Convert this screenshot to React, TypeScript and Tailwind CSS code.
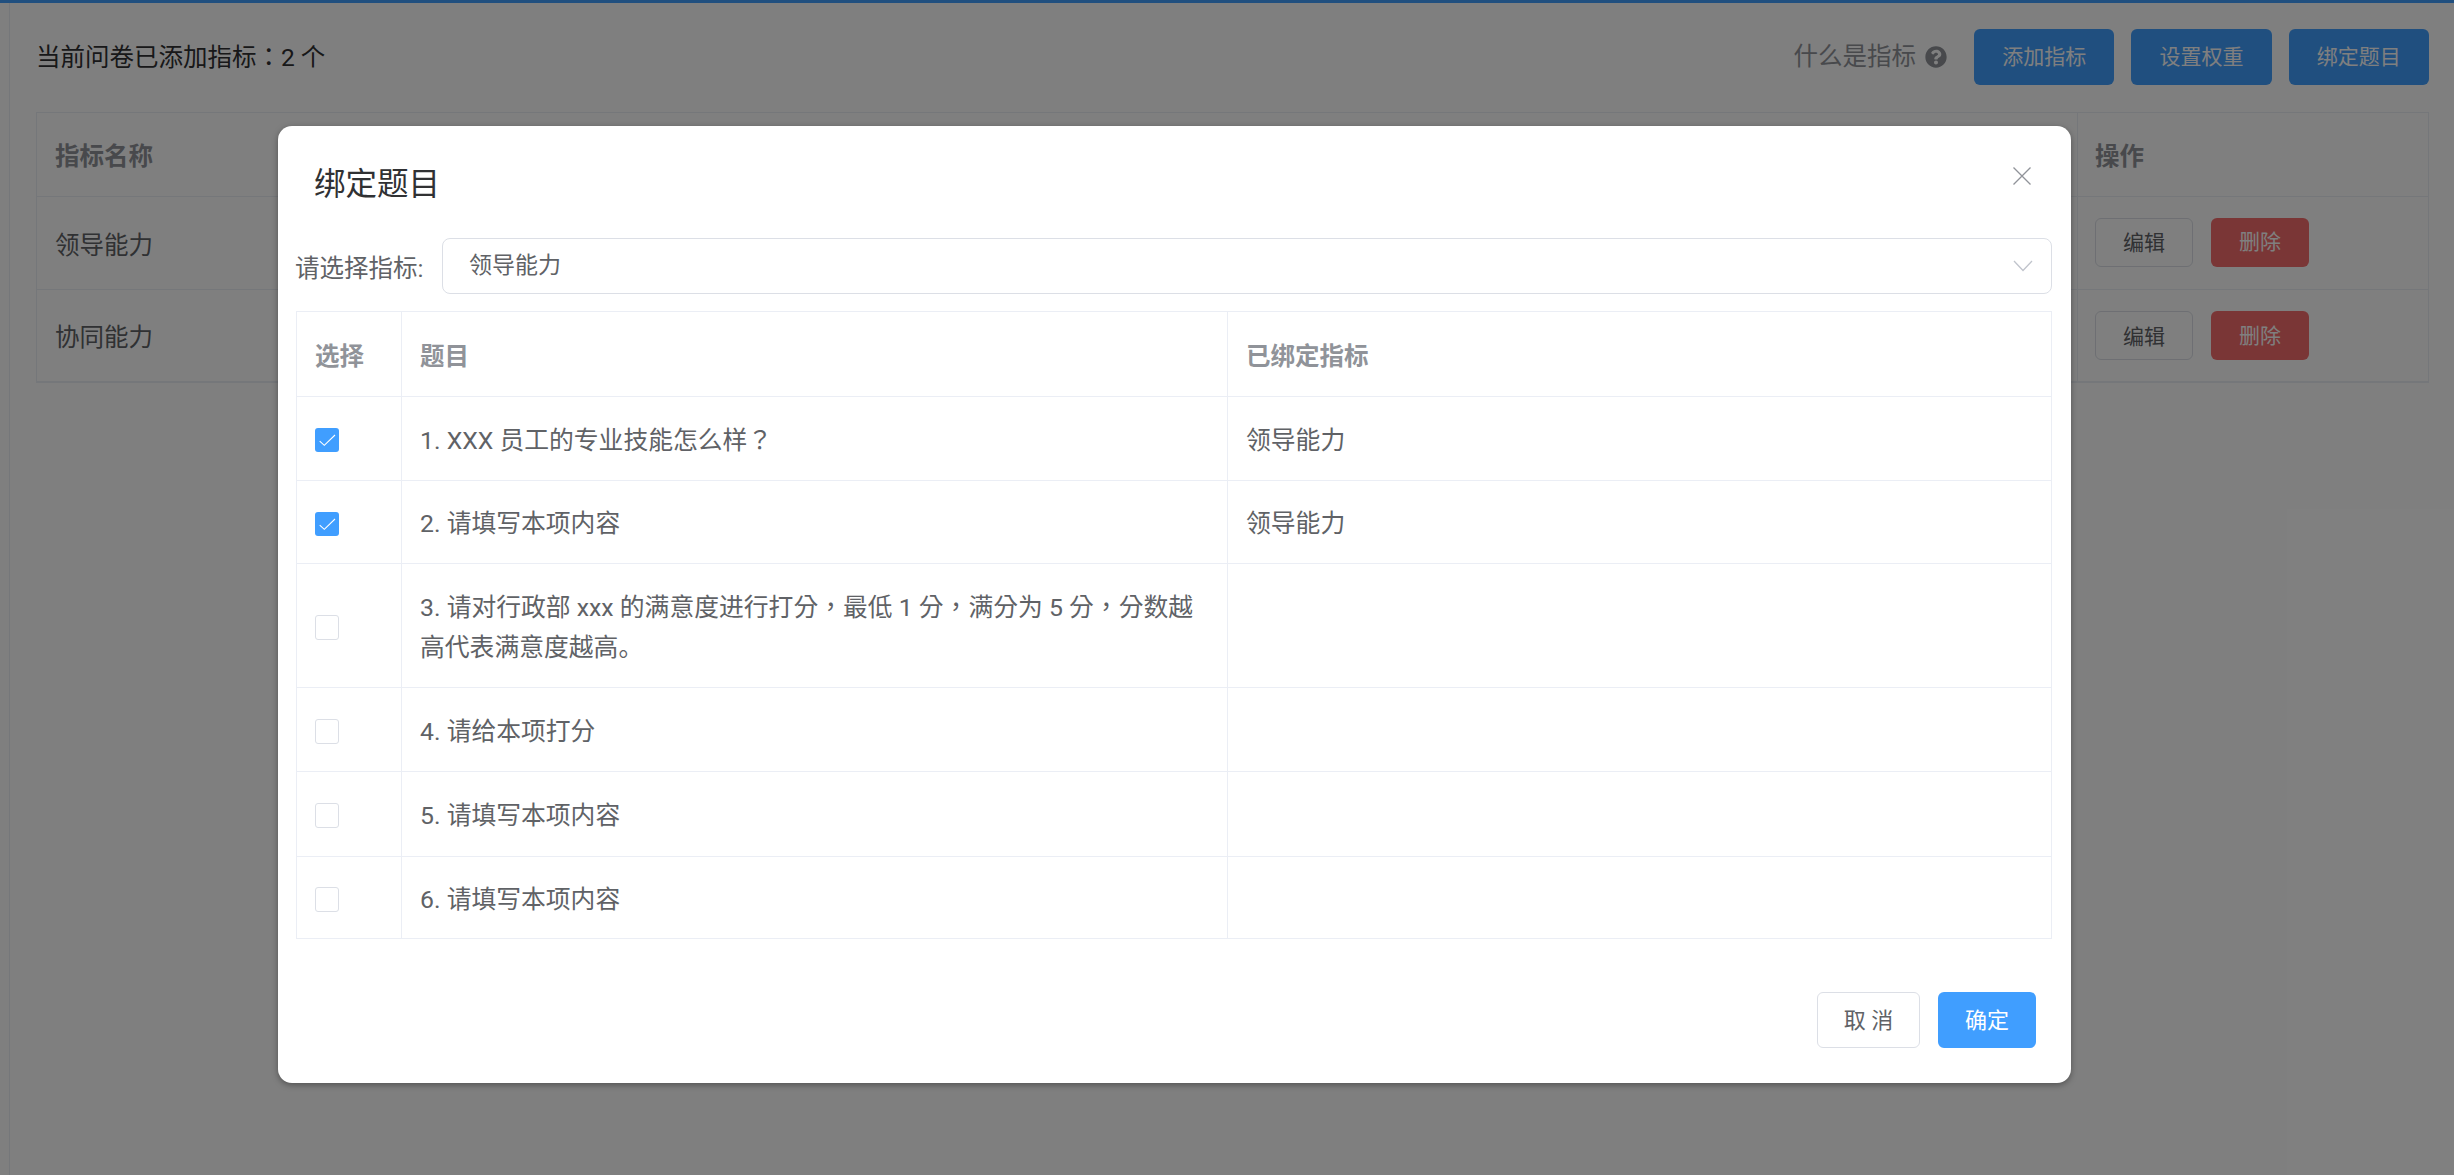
import React from "react";
import { FaQuestionCircle } from "react-icons/fa";

const font = "font-['Roboto','Noto_Sans_CJK_SC',sans-serif]";
const centred = "font-['Roboto','Noto_Sans_CJK_TC',sans-serif]";

function Check({ on, offset }: { on: boolean; offset: string }) {
  if (!on) {
    return <span className={`${offset} block h-[25px] w-[24px] rounded-[3px] border border-[#dcdfe6] bg-white`} />;
  }
  return (
    <span className={`${offset} block h-[24px] w-[24px] rounded-[3px] bg-[#409eff]`}>
      <svg width="24" height="24" viewBox="0 0 24 24" fill="none" stroke="#fff" strokeWidth="1.1">
        <path d="M4.7 13.2 L9.3 17.3 L20 7" />
      </svg>
    </span>
  );
}

const rows: { h: string; on: boolean; offset: string; face: string; text: React.ReactNode; bound: string }[] = [
  { h: "h-[84px]", on: true, offset: "mt-[2px]", face: centred, text: "1. XXX 员工的专业技能怎么样？", bound: "领导能力" },
  { h: "h-[83px]", on: true, offset: "mt-[4px]", face: font, text: "2. 请填写本项内容", bound: "领导能力" },
  {
    h: "h-[124px]",
    on: false,
    offset: "mt-[4px]",
    face: centred,
    text: <>3. 请对行政部 xxx 的满意度进行打分，最低 1 分，满分为 5 分，分数越高代表满意度越高<span className={font}>。</span></>,
    bound: "",
  },
  { h: "h-[84px]", on: false, offset: "mt-[4px]", face: font, text: "4. 请给本项打分", bound: "" },
  { h: "h-[85px]", on: false, offset: "mt-[3px]", face: font, text: "5. 请填写本项内容", bound: "" },
  { h: "h-[82px]", on: false, offset: "mt-[4px]", face: font, text: "6. 请填写本项内容", bound: "" },
];

function PageButton({ label }: { label: string }) {
  return (
    <button className="flex h-[56px] w-[140.33px] items-center justify-center rounded-[6px] bg-[#409eff] pt-[2px] text-[21px] text-white">
      {label}
    </button>
  );
}

function PageRow({ name, h, mb }: { name: string; h: string; mb: string }) {
  return (
    <tr className={`${h} border-b border-[#ebeef5]`}>
      <td className="pl-[18px] pt-[6px] text-[24.5px] text-[#606266]">{name}</td>
      <td className="w-[351px] border-l border-[#ebeef5] pl-[17px]">
        <div className={`${mb} flex gap-[18px]`}>
          <button className="flex h-[49px] w-[98px] items-center justify-center rounded-[6px] border border-[#dcdfe6] bg-white pt-[4px] text-[21px] text-[#606266]">
            编辑
          </button>
          <button className="flex h-[49px] w-[98px] items-center justify-center rounded-[6px] bg-[#f56c6c] pt-[2px] text-[21px] text-white">
            删除
          </button>
        </div>
      </td>
    </tr>
  );
}

export default function App() {
  return (
    <div className={`${font} relative h-[1175px] w-[2454px] overflow-hidden bg-white`}>
      <div className="h-[3px] bg-[#409eff]" />
      <div className="ml-[9px] h-[1172px] border-l border-[#ebeef5] pl-[26px] pr-[25px]">
        <div className="flex h-[109px] items-center justify-between pb-[2px]">
          <div className={`${centred} pt-[4px] text-[24.5px] text-[#303133]`}>当前问卷已添加指标：2 个</div>
          <div className="flex items-center">
            <span className="pt-[2px] text-[24.5px] text-[#909399]">什么是指标</span>
            <FaQuestionCircle className="ml-[9px] mr-[27px] text-[22px] text-[#909399]" />
            <div className="flex gap-[17px]">
              <PageButton label="添加指标" />
              <PageButton label="设置权重" />
              <PageButton label="绑定题目" />
            </div>
          </div>
        </div>
        <table className="w-full table-fixed border-collapse border border-[#ebeef5] border-b-2">
          <thead>
            <tr className="h-[84px] border-b border-[#ebeef5]">
              <th className="pl-[18px] pt-[6px] text-left text-[24.5px] font-bold text-[#909399]">指标名称</th>
              <th className="w-[351px] border-l border-[#ebeef5] pl-[17px] pt-[6px] text-left text-[24.5px] font-bold text-[#909399]">操作</th>
            </tr>
          </thead>
          <tbody>
            <PageRow name="领导能力" h="h-[93px]" mb="mb-[2px]" />
            <PageRow name="协同能力" h="h-[92px]" mb="mb-[0px]" />
          </tbody>
        </table>
      </div>

      <div className="absolute inset-0 bg-black/50">
        <div className="relative ml-[278px] mt-[126px] h-[957px] w-[1793px] rounded-[14px] bg-white pl-[18px] pr-[19px] shadow-[0_2px_6px_rgba(0,0,0,0.35)]">
          <div className="flex h-[112px] items-center pl-[18px] pt-[6px] text-[31.5px] leading-[40px] text-[#303133]">
            绑定题目
          </div>
          <button className="absolute right-[40px] top-[41px] text-[#909399]">
            <svg width="18" height="18" viewBox="0 0 18 18" fill="none" stroke="currentColor" strokeWidth="1.3" className="block">
              <path d="M0.5 0.5 L17.5 17.5 M17.5 0.5 L0.5 17.5" />
            </svg>
          </button>

          <div className="flex h-[56px] items-center">
            <span className="-ml-[1px] w-[147px] shrink-0 pt-[6px] text-[24.5px] text-[#606266]">请选择指标:</span>
            <div className="flex h-[56px] flex-1 items-center justify-between rounded-[8px] border border-[#dcdfe6] pl-[26px] pr-[18px] text-[23px] text-[#606266]">
              <span>领导能力</span>
              <svg width="20" height="12" viewBox="0 0 20 12" fill="none" stroke="#c0c4cc" strokeWidth="1.3">
                <path d="M1 1 L10 10.5 L19 1" />
              </svg>
            </div>
          </div>

          <table className="mt-[17px] w-full table-fixed border-collapse border border-[#ebeef5]">
            <thead>
              <tr className="h-[85px] border-b border-[#ebeef5] text-left text-[24.5px] font-bold text-[#909399]">
                <th className="w-[105px] pl-[18px] pt-[6px]">选择</th>
                <th className="w-[826px] border-l border-[#ebeef5] pl-[18px] pt-[6px]">题目</th>
                <th className="border-l border-[#ebeef5] pl-[18px] pt-[6px]">已绑定指标</th>
              </tr>
            </thead>
            <tbody>
              {rows.map((r, i) => (
                <tr key={i} className={`${r.h} border-b border-[#ebeef5] text-[24.8px] leading-[40px] text-[#606266]`}>
                  <td className="pl-[18px]"><Check on={r.on} offset={r.offset} /></td>
                  <td className={`${r.face} border-l border-[#ebeef5] px-[18px] pt-[4px]`}>{r.text}</td>
                  <td className="border-l border-[#ebeef5] px-[18px] pt-[4px]">{r.bound}</td>
                </tr>
              ))}
            </tbody>
          </table>

          <div className="mt-[53px] flex justify-end gap-[18px] pr-[16px]">
            <button className="flex h-[56px] w-[103px] items-center justify-center rounded-[6px] border border-[#dcdfe6] bg-white text-[22px] text-[#606266]">
              取 消
            </button>
            <button className="flex h-[56px] w-[98px] items-center justify-center rounded-[6px] bg-[#409eff] text-[22px] text-white">
              确定
            </button>
          </div>
        </div>
      </div>
    </div>
  );
}
